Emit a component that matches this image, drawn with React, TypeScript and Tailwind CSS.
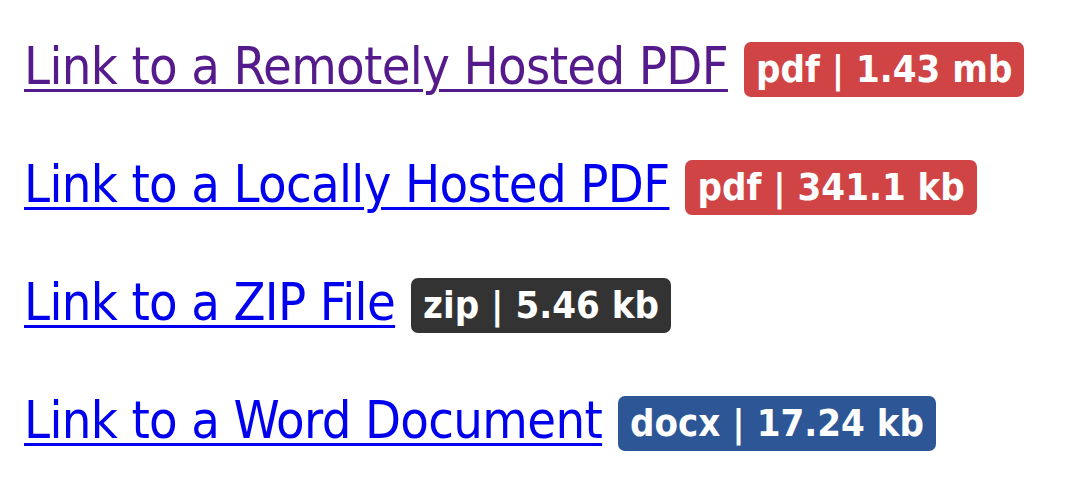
export default function App() {
  const rows = [
    { text: "Link to a Remotely Hosted PDF", badge: "pdf | 1.43 mb", bg: "bg-[#d04446]", link: "text-[#551a8b] decoration-[#551a8b]" },
    { text: "Link to a Locally Hosted PDF", badge: "pdf | 341.1 kb", bg: "bg-[#d04446]", link: "text-[#0000ee] decoration-[#0000ee]" },
    { text: "Link to a ZIP File", badge: "zip | 5.46 kb", bg: "bg-[#333333]", link: "text-[#0000ee] decoration-[#0000ee]" },
    { text: "Link to a Word Document", badge: "docx | 17.24 kb", bg: "bg-[#2d5697]", link: "text-[#0000ee] decoration-[#0000ee]" },
  ];
  return (
    <div className="min-h-[498px] w-[1070px] bg-white pl-[24px] pt-[36px] [font-family:'DejaVu_Sans_Condensed','DejaVu_Sans',sans-serif]">
      {rows.map((r) => (
        <div key={r.text} className="flex h-[118px] items-start whitespace-nowrap">
          <a href="#" className={`text-[52px] leading-[60px] tracking-[-0.65px] underline underline-offset-[5px] decoration-[3px] ${r.link}`}>
            {r.text}
          </a>
          <span className={`ml-[16px] mt-[6px] flex h-[55px] items-center rounded-[7px] px-[12px] text-[38px] font-bold text-white ${r.bg}`}>
            {r.badge}
          </span>
        </div>
      ))}
    </div>
  );
}
